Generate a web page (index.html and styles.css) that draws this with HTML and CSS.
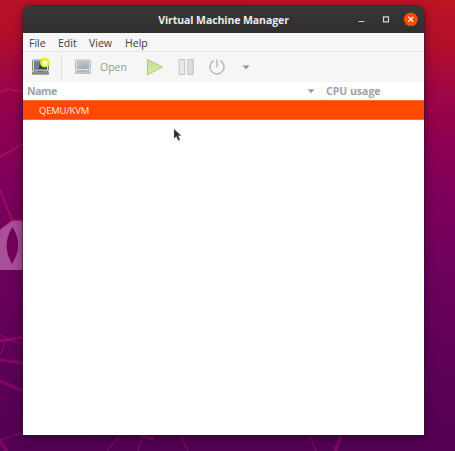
FILE: index.html
```
<!DOCTYPE html>
<html lang="en">
<head>
<meta charset="utf-8">
<title>Virtual Machine Manager</title>
<link rel="stylesheet" href="styles.css">
</head>
<body>
<svg class="wallpaper" width="455" height="451" viewBox="0 0 455 451" aria-hidden="true">
  <g fill="none" stroke="#d52260" stroke-opacity=".55" stroke-width="1.3">
    <path d="M0 92 L9 89 L23 92" stroke-width="2" stroke-opacity=".4"/>
    <path d="M0 157 L23 144M0 190 L12 220 H23M12 220 L0 230"/>
  </g>
  <path d="M0 230 L12 221 H23 V270 H0Z" fill="#a95198"/>
  <path d="M12.500 227 Q24 245 12 264 Q1 245 12.500 227Z" fill="#73005b"/>
  <g fill="none" stroke="#a00b75" stroke-opacity=".55">
    <path d="M0 341 L23 337M0 360 L23 363M0 381 L23 391" stroke-width="3"/>
    <path d="M0 334 Q10 343 23 343M5 336 Q6 346 0 354M0 440 L23 433M121 434 L107 451M142 434 L138 451M180 434 L188 451M309 434 L316 451" stroke-width="1.300"/>
    <path d="M0 441 L7 451M342 434 L335 451M142 436 L154 439" stroke-width="3.500"/>
  </g>
</svg>
<main class="window">
  <header class="titlebar">
    <h1>Virtual Machine Manager</h1>
    <svg class="controls" width="64" height="16" viewBox="0 0 64 16">
      <path d="M4.500 9.500h6" stroke="#c9c7c5" fill="none"/>
      <path d="M29.500 4.800h5v5h-5z" stroke="#d5d3d1" stroke-width="1.200" fill="none"/>
      <circle cx="56.800" cy="7.300" r="6.900" fill="#fc4a08"/>
      <path d="M54.300 4.800l5 5m0-5l-5 5" stroke="#fff0e9" stroke-width="1.300"/>
    </svg>
  </header>
  <nav class="menubar"><span class="file">File</span><span class="edit">Edit</span><span class="view">View</span><span class="help">Help</span></nav>
  <div class="toolbar">
    <svg class="new-vm" width="20" height="18" viewBox="0 0 20 18">
      <rect x="1.500" y="2" width="16" height="11" rx="1" fill="#dedfdd" stroke="#858784"/>
      <rect x="3" y="3.500" width="13" height="8" fill="#34475d"/>
      <path d="M3 3.500h6l-1.500 8H3z" fill="#71808f"/>
      <path d="M7 13h5v2H7z" fill="#666"/>
      <path d="M2 13.800h15l.8 2.400H1.200z" fill="#969894" stroke="#696b68" stroke-width=".7"/>
      <circle cx="13.800" cy="4.700" r="4.800" fill="#e9e900"/>
      <path d="M14 .8l1.200 2.500 2.800.3-2.100 2 .6 2.800L14 7l-2.500 1.400.6-2.800-2.100-2 2.800-.3z" fill="#fffff0"/>
    </svg>
    <i class="separator"></i>
    <svg class="monitor" width="18" height="16" viewBox="0 0 18 16">
      <rect x="1.500" y="1" width="15" height="10.500" rx="1" fill="#e4e5e5" stroke="#b5b7b7"/>
      <rect x="3" y="2.500" width="12" height="7.500" fill="#a9b2bb"/>
      <path d="M3 2.500h12v2L3 8z" fill="#b7bfc6"/>
      <path d="M7 11.500h4v1.500H7z" fill="#aaa"/>
      <path d="M2 12.500h14l.7 2H1.300z" fill="#c6c8c8" stroke="#adafaf" stroke-width=".7"/>
    </svg>
    <span class="open">Open</span>
    <svg class="actions" width="106" height="20" viewBox="0 0 106 20">
      <defs>
        <linearGradient id="play" x2="0" y2="1"><stop stop-color="#c5dda1"/><stop offset="1" stop-color="#dceb91"/></linearGradient>
        <linearGradient id="pause"><stop stop-color="#eceeec"/><stop offset="1" stop-color="#d8dad8"/></linearGradient>
      </defs>
      <path d="M1.500 2.500L16.500 10 1.500 17.800z" fill="url(#play)" stroke="#aec981" stroke-linejoin="round"/>
      <path d="M33.200 2.500h5.500v15h-5.500zM41.800 2.500h5.500v15h-5.500z" fill="url(#pause)" stroke="#c0c2c0"/>
      <path d="M67.800 3.700a7 7 0 1 0 6.400 0M71 2.500v8" fill="none" stroke="#b4b4b4" stroke-width="1.400"/>
      <path d="M96.500 8.500h7l-3.500 3.800z" fill="#929292"/>
    </svg>
  </div>
  <div class="columns">
    <span class="name">Name</span>
    <svg width="8" height="5" viewBox="0 0 8 5"><path d="M.5.3h7L4 4.200z" fill="#9c9d9d"/></svg>
    <span class="cpu">CPU usage</span>
  </div>
  <div class="row"><span>QEMU/KVM</span></div>
  <div class="list"></div>
</main>
<svg class="cursor" width="10" height="14" viewBox="0 0 10 14"><path d="M1 1v9.500l2.300-2 1.900 4 1.900-.9-1.900-3.900h3.200z" fill="#272b2d" stroke="#aaa" stroke-width=".45"/></svg>
</body>
</html>
```
FILE: styles.css
```
* { box-sizing: border-box; }
html, body { margin: 0; width: 455px; height: 451px; overflow: hidden; }
body {
  padding: 6px 31px 16px 23px;
  background: linear-gradient(178deg, #bd1424 0, #b30f2b 10%, #9f0645 20%, #8f0050 29%, #7d005b 43%, #6c005d 60%, #5d0058 80%, #51004f 100%);
  background: linear-gradient(182deg, #bd1424 0, #b30f2b 10%, #9f0645 20%, #8f0050 29%, #7d005b 43%, #6c005d 60%, #5d0058 80%, #520052 100%);
  font-family: "Open Sans", "Noto Sans", sans-serif;
  font-size: 10.5px;
  color: #3d3d3d;
}
.wallpaper { position: absolute; left: 0; top: 0; }
.window {
  position: relative;
  display: flex;
  flex-direction: column;
  width: 401px;
  height: 428.500px;
  border-radius: 6px 6px 0 0;
  box-shadow: 0 0 0 .7px rgba(50,20,45,.6), 0 3px 12px rgba(20,0,20,.55);
}
.titlebar {
  display: grid;
  grid-template-columns: 1fr;
  align-items: center;
  height: 27px;
  background: linear-gradient(#383636, #302e2e);
  border-radius: 6px 6px 0 0;
  color: #eeeceb;
}
h1 { grid-area: 1 / 1; margin: 0; padding-top: 1px; text-align: center; font-size: 10.5px; line-height: 15px; letter-spacing: -.08px; }
.controls { grid-area: 1 / 1; justify-self: end; margin-right: 6px; }
.menubar {
  display: grid;
  grid-template-columns: 29px 31px 36px 1fr;
  align-items: center;
  height: 19px;
  padding: 1px 0 0 6px;
  background: #f6f6f6;
  border-bottom: 1px solid #e7e7e7;
  line-height: 16px;
  font-weight: 500;
}
.toolbar {
  display: flex;
  align-items: center;
  height: 30px;
  background: #f6f6f6;
}
.new-vm { margin-left: 8px; }
.separator { width: 1px; height: 25px; margin-left: 10px; background: #e2e2e2; }
.monitor { margin-left: 12px; }
.open { width: 46px; margin-left: 8px; color: #999; font-weight: 500; }
.columns {
  display: grid;
  grid-template-columns: 280px 18px 1fr;
  align-items: center;
  height: 18px;
  padding-left: 4px;
  background: #fff;
  color: #a0a1a1;
  font-weight: 700;
}
.name { letter-spacing: -.4px; }
.cpu { display: flex; align-items: center; height: 18px; margin-left: -4px; padding-left: 4px; border-left: 1px solid #f2f2f2; }
.row { display: flex; align-items: center; height: 20px; padding: 1px 0 0 16px; background: #ff4900; border-top: 1px solid #ff6a33; border-bottom: 1px solid #ff6a33; color: #ffeadf; font-size: 9.500px; line-height: 13px; letter-spacing: -.2px; }
.list { flex: 1; background: #fff; }
.cursor { position: absolute; left: 173px; top: 128px; }
```
